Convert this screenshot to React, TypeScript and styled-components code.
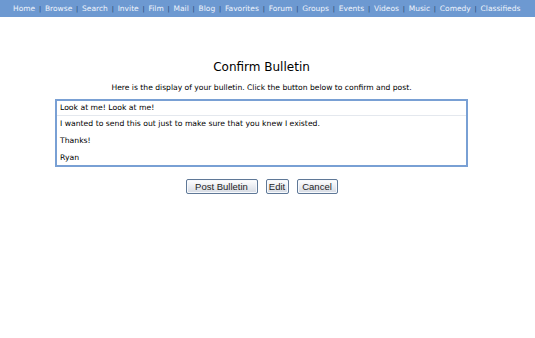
import React from 'react';
import styled, { createGlobalStyle } from 'styled-components';

const GlobalStyle = createGlobalStyle`
  html, body {
    margin: 0;
    padding: 0;
    background: #fff;
  }
  body {
    font-family: Verdana, "DejaVu Sans", sans-serif;
    color: #000;
  }
`;

const NavBar = styled.nav`
  height: 17px;
  background: #6d99d1;
  display: flex;
  align-items: center;
  padding-left: 13px;
  font-size: 7.5px;
  color: #eef3fb;
  white-space: nowrap;
  overflow: hidden;
`;

const NavLink = styled.a`
  color: #eef3fb;
  text-decoration: none;
`;

const Sep = styled.span`
  color: #1d3b66;
  margin: 0 3.8px;
  font-size: 6.5px;
`;

const Content = styled.main`
  width: 523px;
  display: flex;
  flex-direction: column;
  align-items: center;
  padding-top: 42px;
`;

const Title = styled.h1`
  margin: 0;
  font-size: 12px;
  font-weight: normal;
  line-height: 16px;
`;

const Intro = styled.p`
  margin: 8px 0 6px;
  font-size: 7.6px;
  line-height: 10px;
`;

const BulletinBox = styled.div`
  width: 409px;
  border: 2px solid #79a0d4;
  font-size: 7.7px;
  line-height: 10px;
`;

const Subject = styled.div`
  padding: 2px 3px 2px;
  border-bottom: 1px solid #e4e8ee;
`;

const Body = styled.div`
  padding: 3px 3px 2px;
`;

const Para = styled.p`
  margin: 0 0 7px;
  &:last-child {
    margin-bottom: 0;
  }
`;

const Buttons = styled.div`
  display: flex;
  gap: 8px;
  margin-top: 12px;
`;

const Button = styled.button<{ $w: number }>`
  width: ${p => p.$w}px;
  height: 15px;
  padding: 0;
  font-family: "Liberation Sans", Arial, sans-serif;
  font-size: 9.5px;
  color: #222;
  border: 1px solid #5f7897;
  border-radius: 2px;
  background: linear-gradient(#ffffff, #e6e9ef 60%, #d6dbe3);
  box-shadow: inset 0 0 0 1px #f7f9fc;
`;

const links = ['Home', 'Browse', 'Search', 'Invite', 'Film', 'Mail', 'Blog', 'Favorites', 'Forum', 'Groups', 'Events', 'Videos', 'Music', 'Comedy', 'Classifieds'];

export default function App() {
  return (
    <>
      <GlobalStyle />
      <NavBar>
        {links.map((l, i) => (
          <React.Fragment key={l}>
            {i > 0 && <Sep>|</Sep>}
            <NavLink href="#">{l}</NavLink>
          </React.Fragment>
        ))}
      </NavBar>
      <Content>
        <Title>Confirm Bulletin</Title>
        <Intro>Here is the display of your bulletin. Click the button below to confirm and post.</Intro>
        <BulletinBox>
          <Subject>Look at me! Look at me!</Subject>
          <Body>
            <Para>I wanted to send this out just to make sure that you knew I existed.</Para>
            <Para>Thanks!</Para>
            <Para>Ryan</Para>
          </Body>
        </BulletinBox>
        <Buttons>
          <Button $w={72}>Post Bulletin</Button>
          <Button $w={23}>Edit</Button>
          <Button $w={41}>Cancel</Button>
        </Buttons>
      </Content>
    </>
  );
}
